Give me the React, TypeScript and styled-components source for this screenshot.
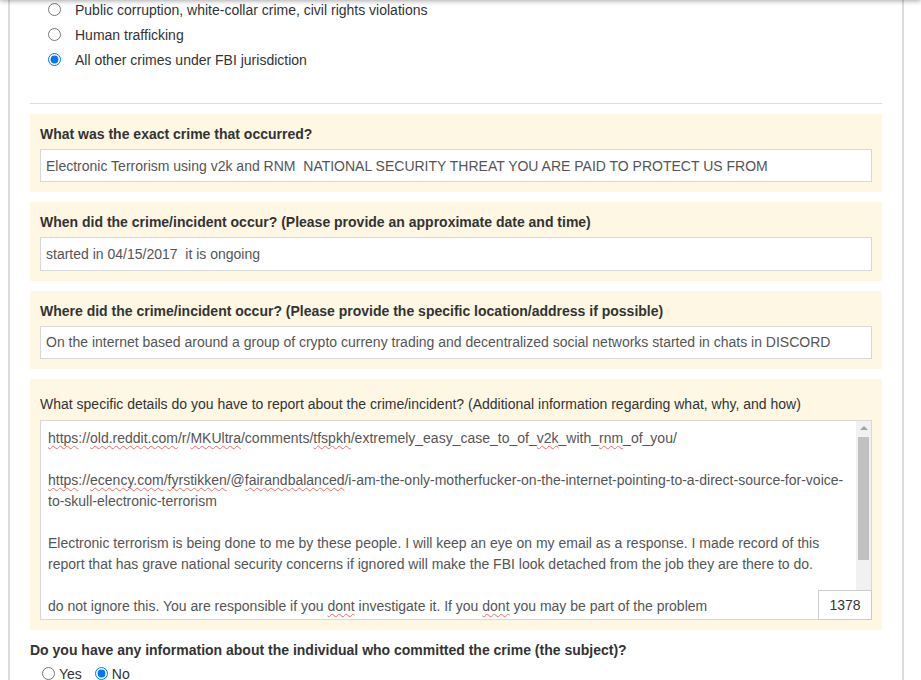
import * as React from 'react'
import styled, { createGlobalStyle } from 'styled-components'

const GlobalStyle = createGlobalStyle`
  html, body {
    margin: 0;
    padding: 0;
    background: #fff;
  }
  body {
    font-family: "Liberation Sans", Arial, sans-serif;
    font-size: 14px;
    color: #333;
    overflow: hidden;
  }
`

const TopShadow = styled.div`
  position: fixed;
  top: -10px;
  left: 0;
  right: 0;
  height: 10px;
  box-shadow: 0 1px 5px rgba(0, 0, 0, 0.35);
  z-index: 5;
`

const Page = styled.div`
  width: 896px;
  margin-left: 8px;
  box-sizing: border-box;
  border-left: 2px solid #dcdcdc;
  border-right: 2px solid #dcdcdc;
  padding: 0 20px 40px;
`

const OptionList = styled.div`
  margin-top: -3px;
  padding-left: 18px;
  display: flex;
  flex-direction: column;
`

const OptionRow = styled.label`
  display: flex;
  align-items: center;
  gap: 14px;
  height: 25px;
`

const Radio = styled.input.attrs({ type: 'radio' })`
  width: 13px;
  height: 13px;
  margin: 0;
  flex: none;
`

const Divider = styled.hr`
  border: 0;
  border-top: 1px solid #dddddd;
  margin: 31px 0 10px;
`

const Panels = styled.div`
  display: flex;
  flex-direction: column;
  gap: 10px;
`

const Panel = styled.div`
  background: #fdf7e3;
  padding: 10px;
`

const FieldLabel = styled.div<{ $plain?: boolean }>`
  font-weight: ${p => (p.$plain ? 'normal' : 'bold')};
  line-height: 21px;
  padding-top: ${p => (p.$plain ? '5px' : '0')};
  margin-bottom: ${p => (p.$plain ? '5px' : '4px')};
`

const TextInput = styled.input`
  display: block;
  width: 100%;
  height: 33.33px;
  box-sizing: border-box;
  border: 1px solid #d8d8d8;
  padding: 0 5px;
  font-family: "Liberation Sans", Arial, sans-serif;
  font-size: 14px;
  color: #555;
  background: #fff;
  outline: none;
`

const AreaWrap = styled.div`
  position: relative;
`

const Area = styled.div`
  height: 200px;
  box-sizing: border-box;
  border: 1px solid #d8d8d8;
  background: #fff;
  display: flex;
  overflow: hidden;
`

const AreaText = styled.div`
  flex: 1;
  min-width: 0;
  padding: 7px 7px 0;
  line-height: 21px;
  white-space: pre-wrap;
  color: #555;
`

const ScrollTrack = styled.div`
  width: 15px;
  flex: none;
  background: #f1f1f1;
  display: flex;
  flex-direction: column;
  align-items: center;
`

const ScrollArrow = styled.div`
  height: 15px;
  width: 15px;
  display: flex;
  align-items: center;
  justify-content: center;
  &::before {
    content: '';
    border-left: 4px solid transparent;
    border-right: 4px solid transparent;
    border-bottom: 4px solid #a3a3a3;
  }
`

const ScrollThumb = styled.div`
  width: 11px;
  height: 123px;
  margin-top: 1px;
  margin-right: 1px;
  background: #c1c1c1;
`

const Misspelt = styled.span`
  text-decoration: underline wavy #ec6b68;
  text-decoration-thickness: 1px;
  text-underline-offset: 2px;
  text-decoration-skip-ink: none;
`

const Counter = styled.div`
  position: absolute;
  right: 0;
  bottom: 0;
  width: 54px;
  height: 30px;
  box-sizing: border-box;
  border: 1px solid #cccccc;
  background: #fff;
  display: flex;
  align-items: center;
  justify-content: center;
  color: #333;
`

const Question = styled.div`
  font-weight: bold;
  line-height: 20px;
  margin-top: 10px;
`

const InlineOptions = styled.div`
  display: flex;
  align-items: center;
  gap: 13px;
  height: 20px;
  margin-top: 4px;
  padding-left: 12px;
`

const InlineOption = styled.label`
  display: flex;
  align-items: center;
  gap: 4px;
`

const topOptions = [
  { label: 'Public corruption, white-collar crime, civil rights violations', checked: false },
  { label: 'Human trafficking', checked: false },
  { label: 'All other crimes under FBI jurisdiction', checked: true },
]

const fields = [
  {
    label: 'What was the exact crime that occurred?',
    value: 'Electronic Terrorism using v2k and RNM  NATIONAL SECURITY THREAT YOU ARE PAID TO PROTECT US FROM',
  },
  {
    label: 'When did the crime/incident occur? (Please provide an approximate date and time)',
    value: 'started in 04/15/2017  it is ongoing',
  },
  {
    label: 'Where did the crime/incident occur? (Please provide the specific location/address if possible)',
    value: 'On the internet based around a group of crypto curreny trading and decentralized social networks started in chats in DISCORD',
  },
]

const App = () => {
  return (
    <>
      <GlobalStyle />
      <TopShadow />
      <Page>
        <OptionList>
          {topOptions.map(o => (
            <OptionRow key={o.label}>
              <Radio name="crimeType" defaultChecked={o.checked} />
              {o.label}
            </OptionRow>
          ))}
        </OptionList>
        <Divider />
        <Panels>
          {fields.map(f => (
            <Panel key={f.label}>
              <FieldLabel>{f.label}</FieldLabel>
              <TextInput defaultValue={f.value} spellCheck={false} />
            </Panel>
          ))}
          <Panel>
            <FieldLabel $plain>
              What specific details do you have to report about the crime/incident? (Additional information regarding what, why, and how)
            </FieldLabel>
            <AreaWrap>
              <Area>
                <AreaText>
                  <Misspelt>https</Misspelt>://<Misspelt>old.reddit.com</Misspelt>/r/<Misspelt>MKUltra</Misspelt>/comments/<Misspelt>tfspkh</Misspelt>/extremely_easy_case_to_of_<Misspelt>v2k</Misspelt>_with_<Misspelt>rnm</Misspelt>_of_you/
                  {'\n\n'}
                  <Misspelt>https</Misspelt>://<Misspelt>ecency.com</Misspelt>/<Misspelt>fyrstikken</Misspelt>/@<Misspelt>fairandbalanced</Misspelt>/i-am-the-only-motherfucker-on-the-internet-pointing-to-a-direct-source-for-voice-to-skull-electronic-terrorism
                  {'\n\n'}
                  Electronic terrorism is being done to me by these people. I will keep an eye on my email as a response. I made record of this report that has grave national security concerns if ignored will make the FBI look detached from the job they are there to do.
                  {'\n\n'}
                  do not ignore this. You are responsible if you <Misspelt>dont</Misspelt> investigate it. If you <Misspelt>dont</Misspelt> you may be part of the problem
                </AreaText>
                <ScrollTrack>
                  <ScrollArrow />
                  <ScrollThumb />
                </ScrollTrack>
              </Area>
              <Counter>1378</Counter>
            </AreaWrap>
          </Panel>
        </Panels>
        <Question>Do you have any information about the individual who committed the crime (the subject)?</Question>
        <InlineOptions>
          <InlineOption>
            <Radio name="subject" />
            Yes
          </InlineOption>
          <InlineOption>
            <Radio name="subject" defaultChecked />
            No
          </InlineOption>
        </InlineOptions>
      </Page>
    </>
  )
}

export default App
